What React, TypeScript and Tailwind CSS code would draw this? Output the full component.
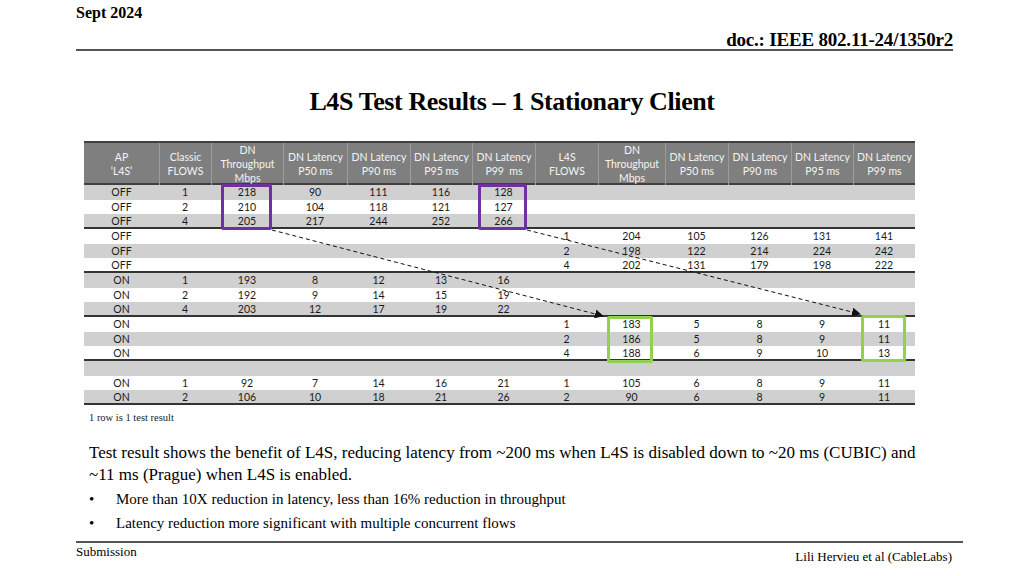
const head = [
  ["AP", "‘L4S’"],
  ["Classic", "FLOWS"],
  ["DN", "Throughput", "Mbps"],
  ["DN Latency", "P50 ms"],
  ["DN Latency", "P90 ms"],
  ["DN Latency", "P95 ms"],
  ["DN Latency", "P99  ms"],
  ["L4S", "FLOWS"],
  ["DN", "Throughput", "Mbps"],
  ["DN Latency", "P50 ms"],
  ["DN Latency", "P90 ms"],
  ["DN Latency", "P95 ms"],
  ["DN Latency", "P99 ms"],
];

const e = ["", "", "", "", "", ""];

const rows: string[][] = [
  ["OFF", "1", "218", "90", "111", "116", "128", ...e],
  ["OFF", "2", "210", "104", "118", "121", "127", ...e],
  ["OFF", "4", "205", "217", "244", "252", "266", ...e],
  ["OFF", "", "", "", "", "", "", "1", "204", "105", "126", "131", "141"],
  ["OFF", "", "", "", "", "", "", "2", "198", "122", "214", "224", "242"],
  ["OFF", "", "", "", "", "", "", "4", "202", "131", "179", "198", "222"],
  ["ON", "1", "193", "8", "12", "13", "16", ...e],
  ["ON", "2", "192", "9", "14", "15", "19", ...e],
  ["ON", "4", "203", "12", "17", "19", "22", ...e],
  ["ON", "", "", "", "", "", "", "1", "183", "5", "8", "9", "11"],
  ["ON", "", "", "", "", "", "", "2", "186", "5", "8", "9", "11"],
  ["ON", "", "", "", "", "", "", "4", "188", "6", "9", "10", "13"],
  ["", "", "", "", "", "", "", "", "", "", "", "", ""],
  ["ON", "1", "92", "7", "14", "16", "21", "1", "105", "6", "8", "9", "11"],
  ["ON", "2", "106", "10", "18", "21", "26", "2", "90", "6", "8", "9", "11"],
];

// rows that close a group get the dark rule
const groupEnd = [2, 5, 8, 11, 14];

const gridCols =
  "grid grid-cols-[75px_52px_72px_64px_63px_62px_63px_63px_67px_63px_63px_62px_62px]";

function Arrows() {
  return (
    <svg
      className="absolute inset-0 pointer-events-none"
      width={831}
      height={264}
      viewBox="0 0 831 264"
    >
      <defs>
        <marker
          id="tip"
          viewBox="0 0 10 10"
          refX="9"
          refY="5"
          markerWidth="9"
          markerHeight="9"
          markerUnits="userSpaceOnUse"
          orient="auto"
        >
          <path d="M0 0 L10 5 L0 10 z" fill="#111" />
        </marker>
      </defs>
      <line x1={188} y1={89} x2={519} y2={175} stroke="#111" strokeWidth={1} strokeDasharray="4 3" markerEnd="url(#tip)" />
      <line x1={443} y1={89} x2={776} y2={173} stroke="#111" strokeWidth={1} strokeDasharray="4 3" markerEnd="url(#tip)" />
    </svg>
  );
}

function ResultsTable() {
  return (
    <div className="relative w-[831px] ml-[84px] mt-[24px] font-['Lato','Liberation_Sans',sans-serif] text-[10.5px]">
      <div className={`${gridCols} h-[44px] bg-[#7f7f7f] border-y-2 border-[#404040] text-[#f4f4f4]`}>
        {head.map((lines, i) => (
          <div
            key={i}
            className={`flex flex-col items-center justify-center leading-[14px] ${i > 0 ? "border-l border-[#9c9c9c]" : ""}`}
          >
            {lines.map((l) => (
              <span key={l} className="whitespace-pre">{l}</span>
            ))}
          </div>
        ))}
      </div>
      {rows.map((r, ri) => (
        <div
          key={ri}
          className={`${gridCols} h-[14.67px] text-[#1a1a1a] ${ri % 2 === 0 ? "bg-[#d0d0d0]" : "bg-white"} ${groupEnd.includes(ri) ? "border-b-2 border-[#333]" : ""}`}
        >
          {r.map((c, ci) => (
            <div key={ci} className="text-center leading-[14px]">
              {c}
            </div>
          ))}
        </div>
      ))}

      {/* highlight boxes */}
      <div className="absolute left-[137px] top-[43px] w-[51px] h-[46px] border-[3px] border-[#7030a0] rounded-[2px]" />
      <div className="absolute left-[394px] top-[43px] w-[49px] h-[46px] border-[3px] border-[#7030a0] rounded-[2px]" />
      <div className="absolute left-[523px] top-[175px] w-[46px] h-[47px] border-[3px] border-[#92d050] rounded-[2px]" />
      <div className="absolute left-[777px] top-[174px] w-[45px] h-[47px] border-[3px] border-[#92d050] rounded-[2px]" />
      <Arrows />
    </div>
  );
}

export default function App() {
  return (
    <div className="w-[1024px] h-[576px] bg-white overflow-hidden font-['Liberation_Serif','Times_New_Roman',serif] text-black">
      {/* Header */}
      <div className="ml-[76px] w-[877px] h-[51px] flex justify-between border-b-2 border-[#555]">
        <div className="self-start pt-[3px] text-[16px] font-bold leading-[20px]">Sept 2024</div>
        <div className="self-end mb-[1px] text-[19px] font-bold leading-[16px] tracking-[-0.2px]">doc.: IEEE 802.11-24/1350r2</div>
      </div>

      <h1 className="mt-[36px] text-center text-[26px] font-bold leading-[30px] tracking-[-0.4px]">
        L4S Test Results – 1 Stationary Client
      </h1>

      <ResultsTable />

      <div className="ml-[89px] mt-[6px] text-[10.5px] leading-[14px] text-[#222]">1 row is 1 test result</div>

      <p className="ml-[89px] mt-[17px] w-[835px] text-[17px] leading-[22px]">
        Test result shows the benefit of L4S, reducing latency from ~200 ms when L4S is disabled down to ~20 ms (CUBIC) and
        ~11 ms (Prague) when L4S is enabled.
      </p>

      <ul className="ml-[89px] mt-[1px] text-[15px] leading-[24px]">
        <li className="flex">
          <span className="w-[27px]">•</span>
          <span>More than 10X reduction in latency, less than 16% reduction in throughput</span>
        </li>
        <li className="flex">
          <span className="w-[27px]">•</span>
          <span>Latency reduction more significant with multiple concurrent flows</span>
        </li>
      </ul>

      {/* Footer */}
      <div className="ml-[76px] mt-[6px] w-[887px] border-t-2 border-[#555] flex justify-between text-[13px]">
        <span className="leading-[18px]">Submission</span>
        <span className="mt-[5px] mr-[11px] leading-[18px]">Lili Hervieu et al (CableLabs)</span>
      </div>
    </div>
  );
}
